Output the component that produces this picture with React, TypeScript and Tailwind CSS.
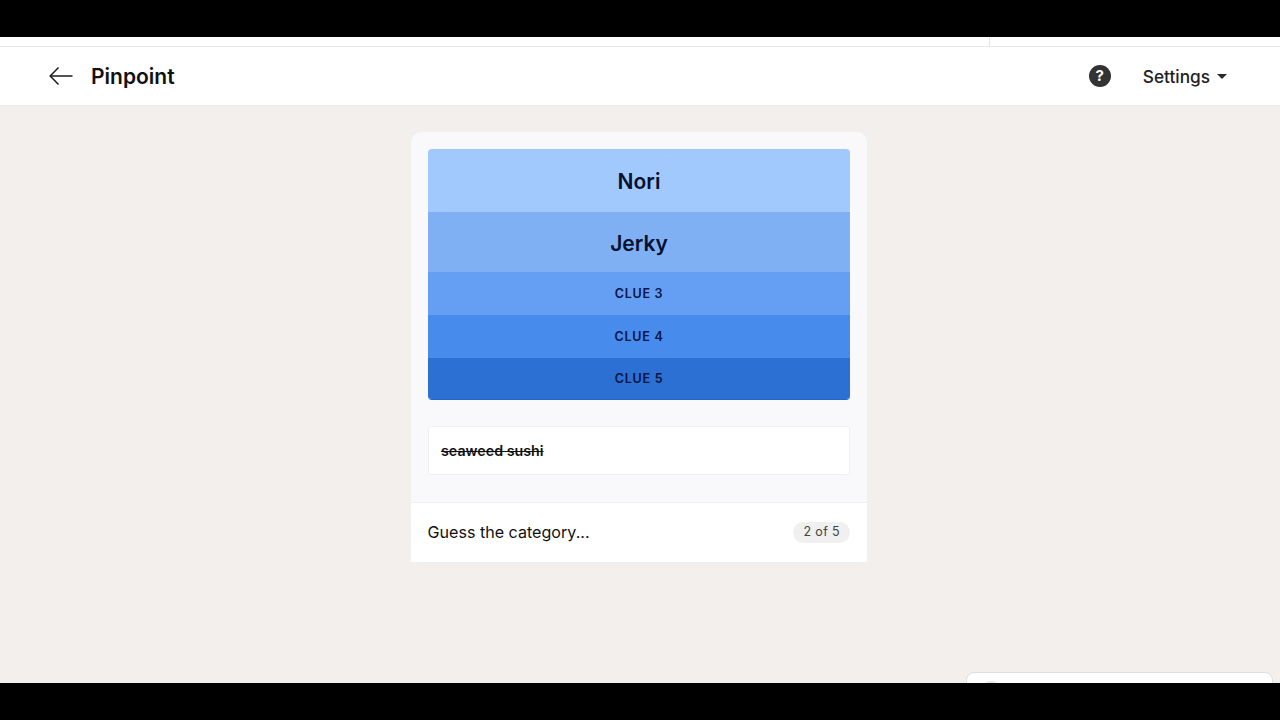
const clues = [
  { label: "Nori", revealed: true, height: "h-[63px] pt-[2px]", bg: "bg-[#a2c9fd]" },
  { label: "Jerky", revealed: true, height: "h-[60px] pt-[3px]", bg: "bg-[#80b0f4]" },
  { label: "CLUE 3", revealed: false, height: "h-[43px] pt-[2px]", bg: "bg-[#659ff3]" },
  { label: "CLUE 4", revealed: false, height: "h-[43px] pt-[2px]", bg: "bg-[#478bed]" },
  { label: "CLUE 5", revealed: false, height: "h-[41px] pt-[2px]", bg: "bg-[#2c70d3]" },
]

function ClueRow({ label, revealed, height, bg }: (typeof clues)[number]) {
  return (
    <div className={`flex items-center justify-center ${height} ${bg}`}>
      {revealed ? (
        <span className="text-[21px] font-semibold text-[#07102e]">{label}</span>
      ) : (
        <span className="text-[12.5px] font-semibold tracking-[0.06em] text-[#07143f]">{label}</span>
      )}
    </div>
  )
}

export default function App() {
  return (
    <div className="flex h-[720px] flex-col overflow-hidden bg-black font-['Inter',sans-serif]">
      <div className="h-[37px] shrink-0 bg-black" />

      {/* Strip left over from the page above */}
      <div className="flex h-[10px] shrink-0 justify-end border-b border-[#e8e8e8] bg-white pr-[290px]">
        <div className="w-px bg-[#e4e4e4]" />
      </div>

      <header className="flex h-[59px] shrink-0 items-center justify-between border-b border-[#ebe8e5] bg-white pr-[53px] pl-[49px]">
        <div className="flex items-center gap-[18px]">
          <svg className="h-[20px] w-[24px] text-[#1a1a1a]" viewBox="0 0 24 20" fill="none" stroke="currentColor" strokeWidth={1.5}>
            <path d="M23.5 10H1.5" />
            <path d="M9.5 1.5L1.2 10L9.5 18.5" />
          </svg>
          <h1 className="text-[21px] leading-none font-semibold text-[#111111]">Pinpoint</h1>
        </div>
        <div className="flex items-center gap-[32px]">
          <div className="flex h-[22px] w-[22px] items-center justify-center rounded-full bg-[#333333] text-[15px] font-bold text-white">
            ?
          </div>
          <button className="flex items-center gap-[7px] text-[17.25px] font-medium text-[#222222]">
            <span className="pt-[2px]">Settings</span>
            <span className="mt-[1px] h-0 w-0 border-x-[5px] border-t-[5px] border-x-transparent border-t-[#2a2a2a]" />
          </button>
        </div>
      </header>

      <main className="relative flex h-[577px] shrink-0 justify-center overflow-hidden bg-[#f3efec] pt-[26px] pr-[2px]">
        <div className="h-[430px] w-[456px] overflow-hidden rounded-t-[10px] bg-[#f9f9fb]">
          <div className="px-[17px] pt-[17px]">
            <div className="flex flex-col overflow-hidden rounded-[4px] border-b border-[#2567c4]">
              {clues.map((clue) => (
                <ClueRow key={clue.label} {...clue} />
              ))}
            </div>
            <div className="mt-[26px] flex h-[49px] items-center rounded-[3px] border border-[#f0f0f1] bg-white px-[12px]">
              <span className="text-[14.25px] font-semibold text-[#111111] line-through">seaweed sushi</span>
            </div>
          </div>
          <div className="mt-[27px] flex h-[60px] items-center justify-between border-t border-[#efeff1] bg-white pr-[17px] pl-[16.5px]">
            <span className="text-[16.1px] text-[#111111]">Guess the category...</span>
            <span className="rounded-full bg-[#f0f0f0] px-[10px] py-[1px] text-[12.5px] tracking-[0.03em] text-[#444444]">
              2 of 5
            </span>
          </div>
        </div>

        {/* Widget cut off by the bottom bar */}
        <div className="absolute top-[566px] right-[7px] h-[40px] w-[307px] rounded-t-[8px] border border-[#e2dedb] bg-white">
          <div className="mt-[8px] ml-[14px] h-[20px] w-[20px] rounded-full bg-[#e6e6e6]" />
        </div>
      </main>

      <div className="flex-1 bg-black" />
    </div>
  )
}
